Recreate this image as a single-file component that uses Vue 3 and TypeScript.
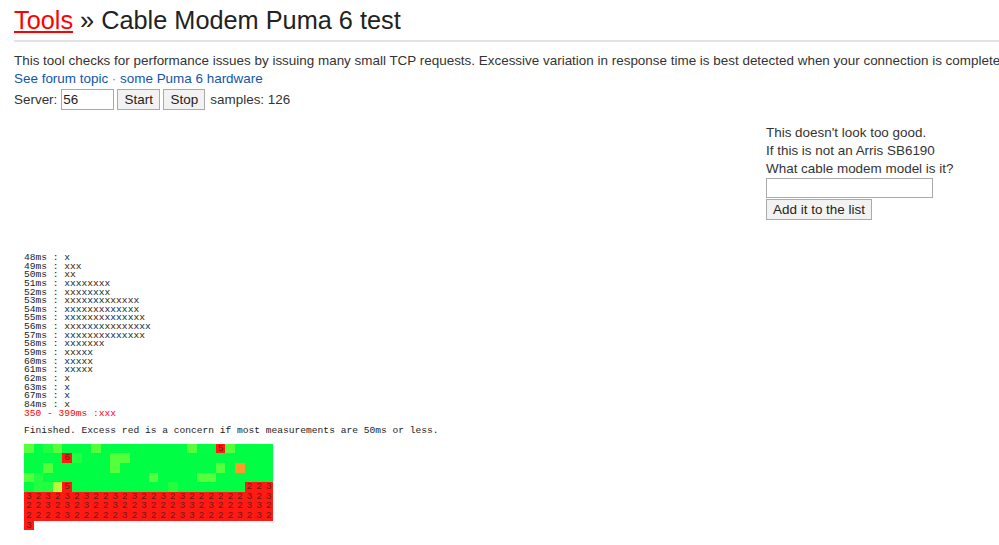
<template>
  <div class="page">
    <h1 class="title"><a href="#" class="crumb">Tools</a> » Cable Modem Puma 6 test</h1>
    <hr class="rule" />
    <p class="line intro">
      This tool checks for performance issues by issuing many small TCP requests. Excessive variation in response time is best detected when your connection is completely idle.
    </p>
    <p class="line">
      <a href="#" class="link">See forum topic</a>
      <span class="dot"> · </span>
      <a href="#" class="link">some Puma 6 hardware</a>
    </p>
    <div class="controls">
      <span class="label">Server:</span>
      <input class="server" type="text" value="56" />
      <button class="btn start">Start</button>
      <button class="btn stop">Stop</button>
      <span>samples: 126</span>
    </div>

    <div class="ask">
      <div class="line">This doesn't look too good.</div>
      <div class="line">If this is not an Arris SB6190</div>
      <div class="line">What cable modem model is it?</div>
      <input class="model" type="text" />
      <button class="btn add">Add it to the list</button>
    </div>

    <div class="results">
      <pre class="histogram">{{ histogram }}</pre>
      <pre class="histogram over">350 - 399ms :xxx</pre>
      <pre class="histogram finished">Finished. Excess red is a concern if most measurements are 50ms or less.</pre>
      <div class="grid">
        <div
          v-for="(cell, i) in cells"
          :key="i"
          class="cell"
          :style="{ background: cell.color }"
        >{{ cell.label }}</div>
      </div>
    </div>
  </div>
</template>

<script setup lang="ts">
const counts: [number, number][] = [
  [48, 1], [49, 3], [50, 2], [51, 8], [52, 8], [53, 13],
  [54, 13], [55, 14], [56, 15], [57, 14], [58, 7], [59, 5],
  [60, 5], [61, 5], [62, 1], [63, 1], [67, 1], [84, 1],
];

const histogram = counts.map(([ms, n]) => `${ms}ms : ${"x".repeat(n)}`).join("\n");

const GREEN = "#00ff44";
const SOFT = "#22ff40";
const LIGHT = "#55ff3c";
const RED = "#ff1a14";

// sparse overrides for the green part of the heat map, [row, col]
const greens: Record<string, string> = {
  "0,0": LIGHT, "0,2": SOFT, "0,3": LIGHT, "0,7": LIGHT, "0,17": LIGHT, "0,21": LIGHT,
  "1,5": SOFT, "1,9": LIGHT, "1,10": LIGHT,
  "2,2": LIGHT, "2,9": LIGHT, "2,20": LIGHT, "2,22": "#ff9a2a",
  "3,0": LIGHT, "3,1": SOFT, "3,13": LIGHT, "3,18": LIGHT, "3,19": LIGHT,
  "4,1": SOFT, "4,2": SOFT, "4,3": "#b4ff3c", "4,15": SOFT,
};

const reds: Record<string, string> = {
  "0,20": "5", "1,4": "6", "4,4": "5", "4,23": "2", "4,24": "2", "4,25": "3",
};

const tail = [
  "32323232232322323222222323",
  "22323232232232223323222332",
  "22223222223232223322223232",
  "3",
];

const cells: { color: string; label: string }[] = [];
for (let r = 0; r < 5; r++) {
  for (let c = 0; c < 26; c++) {
    const key = `${r},${c}`;
    if (reds[key]) cells.push({ color: RED, label: reds[key] });
    else cells.push({ color: greens[key] ?? GREEN, label: "" });
  }
}
for (const row of tail) {
  for (const d of row) cells.push({ color: RED, label: d });
}
</script>

<style>
html, body {
  overflow: hidden;
  background: #fff;
}
</style>

<style scoped>
.page {
  width: 999px;
  height: 545px;
  overflow: hidden;
  box-sizing: border-box;
  padding: 0 0 0 14px;
  font-family: "Liberation Sans", Arial, sans-serif;
  font-size: 13.44px;
  color: #333;
}

.title {
  margin: 0;
  padding-top: 5px;
  font-size: 25.3px;
  font-weight: 400;
  line-height: 30px;
  color: #222;
  white-space: nowrap;
}

.crumb {
  color: #f00;
}

.rule {
  margin: 5px 0 0;
  border: 0;
  height: 2px;
  background: #e2e2e2;
}

.line {
  margin: 0;
  line-height: 18px;
  white-space: nowrap;
}

.intro {
  margin-top: 10px;
}

.link {
  color: #1155aa;
  text-decoration: none;
}

.dot {
  color: #888;
}

.controls {
  display: flex;
  align-items: center;
  height: 22px;
}

.label {
  margin-right: 4px;
}

.server {
  width: 53px;
  height: 21px;
  box-sizing: border-box;
  padding: 0 1px;
  border: 1px solid #aaa;
  font: 13.44px "Liberation Sans", Arial, sans-serif;
  color: #222;
  outline: none;
}

.btn {
  height: 21px;
  box-sizing: border-box;
  padding: 0;
  border: 1px solid #aaa;
  border-radius: 0;
  background: #f2f2f2;
  font: 13.44px "Liberation Sans", Arial, sans-serif;
  color: #222;
}

.start {
  width: 43px;
  margin-left: 3px;
}

.stop {
  width: 42px;
  margin: 0 5px 0 3px;
}

.ask {
  margin: 14px 0 0 752px;
  display: flex;
  flex-direction: column;
  align-items: flex-start;
  height: 130px;
}

.model {
  width: 167px;
  height: 20px;
  box-sizing: border-box;
  border: 1px solid #aaa;
  outline: none;
}

.add {
  margin-top: 1px;
  width: 106px;
}

.results {
  margin-left: 10px;
}

.histogram {
  margin: 0;
  font-family: "Liberation Mono", "Courier New", monospace;
  font-size: 9.6px;
  line-height: 8.64px;
  color: #222;
}

.over {
  color: #f00;
}

.finished {
  margin-top: 9px;
}

.grid {
  margin-top: 8px;
  width: 249.6px;
  display: grid;
  grid-template-columns: repeat(26, 9.6px);
  grid-auto-rows: 9.6px;
}

.cell {
  font-family: "Liberation Mono", "Courier New", monospace;
  font-size: 9.6px;
  line-height: 9.6px;
  text-align: center;
  color: #6b1a14;
  overflow: hidden;
}
</style>
